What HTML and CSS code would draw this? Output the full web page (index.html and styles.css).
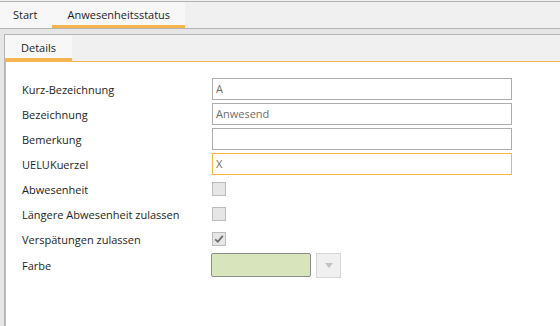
FILE: index.html
```html
<!DOCTYPE html>
<html lang="de">
<head>
    <meta charset="UTF-8">
    <title>Anwesenheitsstatus</title>
    <link rel="stylesheet" href="styles.css">
</head>
<body>
    <div class="tabbar main-tabs">
        <div class="tab">Start</div>
        <div class="tab active">Anwesenheitsstatus</div>
    </div>
    <div class="workspace">
        <div class="panel">
            <div class="tabbar sub-tabs">
                <div class="tab active">Details</div>
            </div>
            <div class="content">
                <div class="row">
                    <label>Kurz-Bezeichnung</label>
                    <div class="field">A</div>
                </div>
                <div class="row">
                    <label>Bezeichnung</label>
                    <div class="field">Anwesend</div>
                </div>
                <div class="row">
                    <label>Bemerkung</label>
                    <div class="field"></div>
                </div>
                <div class="row">
                    <label>UELUKuerzel</label>
                    <div class="field focused">X</div>
                </div>
                <div class="row">
                    <label>Abwesenheit</label>
                    <div class="check"></div>
                </div>
                <div class="row">
                    <label>Längere Abwesenheit zulassen</label>
                    <div class="check"></div>
                </div>
                <div class="row">
                    <label>Verspätungen zulassen</label>
                    <div class="check">
                        <svg width="12" height="12" viewBox="0 0 12 12"><path d="M2.2 6.3 L4.8 8.8 L9.8 2.8" fill="none" stroke="#6b6b6b" stroke-width="1.8"/></svg>
                    </div>
                </div>
                <div class="row color-row">
                    <label>Farbe</label>
                    <div class="swatch"></div>
                    <div class="drop"><span class="arrow"></span></div>
                </div>
            </div>
        </div>
    </div>
</body>
</html>
```

FILE: styles.css
```css
html, body {
    margin: 0;
    padding: 0;
    height: 100%;
}
body {
    font-family: "Open Sans", "Noto Sans", sans-serif;
    font-size: 11px;
    color: #1e1e1e;
    background-color: #f0f0f0;
    display: flex;
    flex-direction: column;
}
.tabbar {
    display: flex;
    background-color: #f0f0f0;
}
.main-tabs {
    margin-top: 1px;
    border-top: 1px solid #b4b4b4;
    border-bottom: 1px solid #b4b4b4;
    height: 26px;
}
.tab {
    height: 23px;
    line-height: 25px;
    padding: 0 13px;
    background-color: #f7f7f7;
    border-bottom: 3px solid transparent;
}
.main-tabs .tab:first-child {
    padding: 0 15px 0 13px;
}
.main-tabs .tab.active {
    padding: 0 15px;
}
.tab.active {
    border-bottom-color: #f6b44e;
}
.workspace {
    flex: 1;
    background-color: #e6e6e6;
    padding: 5px 0 0 4px;
    display: flex;
}
.panel {
    flex: 1;
    display: flex;
    flex-direction: column;
    border-top: 1px solid #b4b4b4;
    border-left: 1px solid #b4b4b4;
}
.sub-tabs {
    height: 26px;
}
.sub-tabs .tab {
    padding: 0 16px;
    line-height: 26px;
}
.content {
    flex: 1;
    background-color: #fff;
    border-top: 1px solid #f6b44e;
    border-left: 1px solid #f6b44e;
    padding: 16px 0 0 16px;
}
.row {
    display: flex;
    align-items: center;
    height: 22px;
    margin-bottom: 3px;
}
.row label {
    width: 190px;
}
.field {
    box-sizing: border-box;
    width: 300px;
    height: 22px;
    line-height: 20px;
    border: 1px solid #adadad;
    padding-left: 3px;
    color: #6d6d6d;
}
.field.focused {
    border-color: #f8b642;
}
.check {
    box-sizing: border-box;
    width: 14px;
    height: 14px;
    border: 1px solid #bcbcbc;
    background-color: #e6e6e6;
    display: flex;
    align-items: center;
    justify-content: center;
}
.check svg {
    display: block;
}
.color-row {
    height: 24px;
}
.color-row label {
    width: 189px;
}
.swatch {
    box-sizing: border-box;
    width: 100px;
    height: 24px;
    background-color: #d8e4bc;
    border: 1px solid #8c8c8c;
    border-radius: 2px;
}
.drop {
    box-sizing: border-box;
    width: 25px;
    height: 25px;
    margin-left: 5px;
    align-self: flex-start;
    background-color: #f0f0f0;
    border: 1px solid #d6d6d6;
    display: flex;
    align-items: center;
    justify-content: center;
}
.arrow {
    width: 0;
    height: 0;
    border-left: 4px solid transparent;
    border-right: 4px solid transparent;
    border-top: 5px solid #c2c2c2;
}
```
